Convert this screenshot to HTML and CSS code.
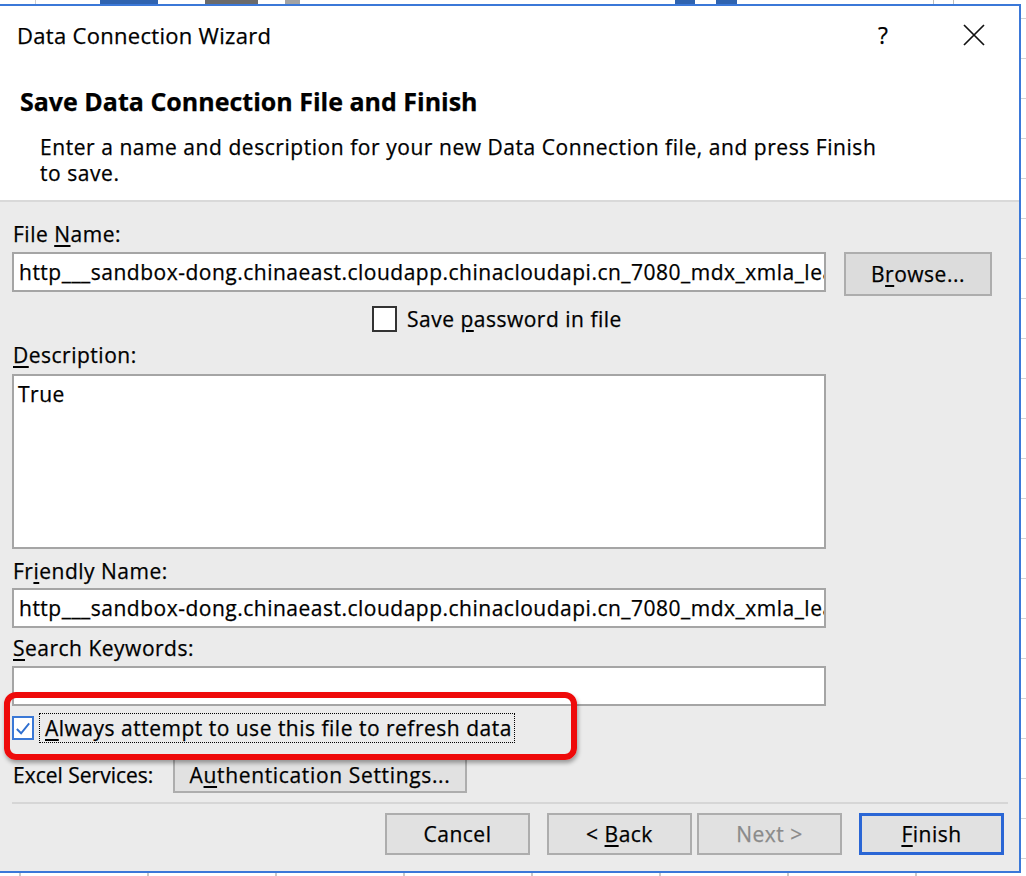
FILE: index.html
```html
<!DOCTYPE html>
<html lang="en">
<head>
<meta charset="utf-8">
<title>Data Connection Wizard</title>
<link rel="stylesheet" href="styles.css">
</head>
<body>
<div class="screen">
  <div class="ribbon-strip"></div>
  <div class="main">
    <div class="dialog">
      <div class="titlebar">
        <span class="title">Data Connection Wizard</span>
        <span class="help">?</span>
        <svg class="close" width="22" height="22" viewBox="0 0 22 22" aria-label="Close">
          <path d="M1 1 L21 21 M21 1 L1 21" stroke="#111" stroke-width="1.7" fill="none"/>
        </svg>
      </div>
      <div class="header">
        <h1 class="heading">Save Data Connection File and Finish</h1>
        <p class="intro">Enter a name and description for your new Data Connection file, and press Finish<br>to save.</p>
      </div>
      <div class="content">
        <div class="label first">File <u>N</u>ame:</div>
        <div class="file-row">
          <input class="field" type="text" readonly value="http___sandbox-dong.chinaeast.cloudapp.chinacloudapi.cn_7080_mdx_xmla_learn_kylin_sales_cube.odc">
          <button class="btn browse"><span>B<u>r</u>owse...</span></button>
        </div>
        <div class="pw-row">
          <span class="box"></span>
          <span class="pw-text">Save <u>p</u>assword in file</span>
        </div>
        <div class="label desc-label"><u>D</u>escription:</div>
        <textarea class="area" readonly>True</textarea>
        <div class="label friendly-label">Fr<u>i</u>endly Name:</div>
        <input class="field friendly" type="text" readonly value="http___sandbox-dong.chinaeast.cloudapp.chinacloudapi.cn_7080_mdx_xmla_learn_kylin_sales_cube">
        <div class="label search-label"><u>S</u>earch Keywords:</div>
        <input class="field search" type="text" readonly value="">
        <div class="always-row">
          <span class="box checked">
            <svg width="19" height="19" viewBox="0 0 19 19"><path d="M3 10 L7.5 14.5 L16 4" stroke="#2f6fd0" stroke-width="2" fill="none"/></svg>
          </span>
          <span class="focus"><u>A</u>lways attempt to use this file to refresh data</span>
        </div>
        <div class="excel-row">
          <span class="excel-label">Excel Services:</span>
          <button class="btn auth"><span>A<u>u</u>thentication Settings...</span></button>
        </div>
        <div class="separator"></div>
        <div class="nav-row">
          <button class="btn nav"><span>Cancel</span></button>
          <button class="btn nav back"><span>&lt; <u>B</u>ack</span></button>
          <button class="btn nav next" disabled><span>Next &gt;</span></button>
          <button class="btn nav finish"><span><u>F</u>inish</span></button>
        </div>
      </div>
    </div>
    <div class="sheet-edge"></div>
  </div>
  <div class="bottom-strip"></div>
  <div class="callout"></div>
</div>
</body>
</html>
```
FILE: styles.css
```css
* {
  box-sizing: border-box;
}

html,
body {
  margin: 0;
  padding: 0;
}

body {
  width: 1026px;
  height: 876px;
  overflow: hidden;
  background: #fff;
  color: #000;
  font-family: "Open Sans", "Noto Sans", "DejaVu Sans", sans-serif;
  font-size: 21px;
  letter-spacing: 0.5px;
  -webkit-text-stroke: 0.25px #000;
}

.screen {
  position: relative;
  width: 1026px;
  height: 876px;
  display: flex;
  flex-direction: column;
}

.ribbon-strip {
  flex: none;
  height: 4px;
  background: linear-gradient(to right,
    #fff 0 35px, #cfcfcf 35px 36px, #fff 36px 100px,
    #2f63b0 100px 158px, #fff 158px 205px,
    #6a6a6a 205px 258px, #fff 258px 285px,
    #a3a3a3 285px 300px, #fff 300px 675px,
    #2f63b0 675px 695px, #fff 695px 716px,
    #2f63b0 716px 737px, #fff 737px 933px,
    #bdbdbd 933px 934px, #fff 934px 953px,
    #bdbdbd 953px 954px, #fff 954px);
}

.main {
  flex: none;
  height: 869px;
  display: flex;
}

.dialog {
  flex: none;
  width: 1021px;
  height: 869px;
  border: 2px solid #3b78d8;
  border-left: none;
  background: #ebebeb;
  display: flex;
  flex-direction: column;
}

.sheet-edge {
  flex: 1;
  background: repeating-linear-gradient(to bottom,
    #fff 0 14px, #d2d2d2 14px 15px, #fff 15px 40px);
}

.bottom-strip {
  flex: 1;
  background: repeating-linear-gradient(to right,
    #fff 0 19px, #c9c9c9 19px 21px, #fff 21px 128px);
}

/* title bar */
.titlebar {
  flex: none;
  height: 58px;
  background: #fff;
  display: flex;
  align-items: center;
  padding-left: 17px;
}

.title {
  flex: 1;
  font-size: 22px;
  letter-spacing: 0.3px;
}

.help {
  width: 20px;
  margin-right: 70px;
  text-align: center;
  font-size: 23px;
  letter-spacing: 0;
}

.close {
  flex: none;
  margin-right: 34px;
}

/* header */
.header {
  flex: none;
  height: 138px;
  background: #fff;
  border-bottom: 2px solid #d9d9d9;
  padding: 20px 0 0 20px;
}

.heading {
  margin: 0;
  font-size: 25px;
  line-height: 34px;
  font-weight: 700;
  letter-spacing: 0;
}

.intro {
  margin: 16px 0 0 20px;
  line-height: 26px;
  letter-spacing: 0.55px;
}

/* content */
.content {
  flex: 1;
  display: flex;
  flex-direction: column;
  padding: 19px 15px 0 12px;
}

.label {
  line-height: 26px;
  height: 26px;
  padding-left: 1px;
}

u {
  text-decoration-thickness: 2px;
  text-underline-offset: 3px;
}

.field {
  display: block;
  width: 814px;
  height: 40px;
  margin: 0;
  border: 2px solid #a5a5a5;
  background: #fff;
  padding: 0 0 0 5px;
  font: inherit;
  letter-spacing: inherit;
  color: #000;
  outline: none;
}

.file-row {
  margin-top: 5px;
  display: flex;
  align-items: flex-start;
  gap: 18px;
}

.btn {
  margin: 0;
  padding: 0;
  font: inherit;
  letter-spacing: inherit;
  color: #000;
  background: #e1e1e1;
  border: 2px solid #adadad;
  display: flex;
  align-items: center;
  justify-content: center;
  white-space: pre;
}

.browse {
  width: 148px;
  height: 44px;
  background: #dcdcdc;
}

.pw-row {
  margin-top: 10px;
  height: 26px;
  display: flex;
  align-items: center;
  padding-left: 360px;
}

.box {
  flex: none;
  width: 25px;
  height: 26px;
  border: 2px solid #333;
  background: #fff;
  display: flex;
  align-items: center;
  justify-content: center;
}

.pw-text {
  margin-left: 10px;
  line-height: 26px;
}

.desc-label {
  margin-top: 10px;
}

.area {
  display: block;
  margin: 6px 0 0;
  width: 814px;
  height: 175px;
  border: 2px solid #a5a5a5;
  background: #fff;
  padding: 5px 4px;
  font: inherit;
  letter-spacing: inherit;
  line-height: 26px;
  color: #000;
  resize: none;
  outline: none;
}

.friendly-label {
  margin-top: 9px;
}

.friendly {
  margin-top: 4px;
}

.search-label {
  margin-top: 7px;
}

.search {
  margin-top: 5px;
}

.always-row {
  margin-top: 7px;
  height: 30px;
  display: flex;
  align-items: center;
}

.box.checked {
  width: 22px;
  height: 24px;
  border-color: #3a78d6;
}

.box.checked svg path {
  -webkit-text-stroke: 0;
}

.focus {
  margin-left: 5px;
  height: 30px;
  line-height: 28px;
  border: 1px dotted #000;
  padding: 0 2px 0 5px;
}

.excel-row {
  margin-top: 14px;
  height: 36px;
  display: flex;
  align-items: center;
}

.excel-label {
  width: 161px;
  padding-left: 1px;
  letter-spacing: 0;
}

.auth {
  width: 294px;
  height: 36px;
  letter-spacing: 0.65px;
}

.separator {
  margin: 9px -4px 0 0;
  height: 2px;
  background: #d6d6d6;
}

.nav-row {
  margin-top: 9px;
  display: flex;
  justify-content: flex-end;
}

.nav {
  width: 145px;
  height: 42px;
  margin-left: 17px;
}

.next {
  margin-left: 5px;
  color: #8a8a8a;
  -webkit-text-stroke: 0.25px #8a8a8a;
}

.finish {
  border: 3px solid #2a66d5;
}

/* annotation overlay */
.callout {
  position: absolute;
  left: 4px;
  top: 692px;
  width: 573px;
  height: 68px;
  border: 6px solid #ee0a0a;
  border-radius: 12px;
  box-shadow: 1px 3px 4px rgba(0, 0, 0, 0.35);
  pointer-events: none;
}
```
